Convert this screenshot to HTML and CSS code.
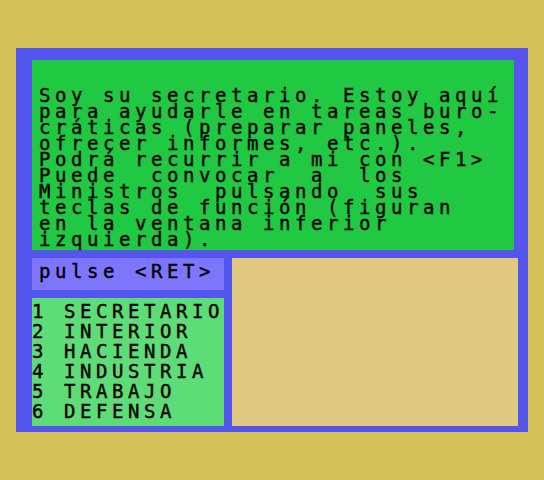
FILE: index.html
```html
<!DOCTYPE html>
<html lang="es">
<head>
<meta charset="utf-8">
<title>Secretario</title>
<link rel="stylesheet" href="styles.css">
</head>
<body>
<div class="screen">
  <div class="message">Soy su secretario. Estoy aquí
para ayudarle en tareas buro-
cráticas (preparar paneles,
ofrecer informes, etc.).
Podrá recurrir a mi con &lt;F1&gt;
Puede  convocar  a  los
Ministros  pulsando  sus
teclas de función (figuran
en la ventana inferior
izquierda).</div>
  <div class="lower">
    <div class="left">
      <div class="prompt">pulse &lt;RET&gt;</div>
      <div class="menu">1 SECRETARIO
2 INTERIOR
3 HACIENDA
4 INDUSTRIA
5 TRABAJO
6 DEFENSA</div>
    </div>
    <div class="board"></div>
  </div>
</div>
</body>
</html>
```
FILE: styles.css
```css
html, body {
  margin: 0;
  padding: 0;
}
body {
  background: #d2c156;
  width: 544px;
  height: 480px;
  padding-top: 48px;
  padding-left: 16px;
  box-sizing: border-box;
  font-family: "DejaVu Sans Mono", "Liberation Mono", monospace;
  font-size: 19px;
  color: #000;
}
.screen {
  width: 512px;
  height: 384px;
  box-sizing: border-box;
  background: #5455ed;
  padding: 12px 0 0 16px;
  display: flex;
  flex-direction: column;
  gap: 8px;
}
.message, .prompt, .menu {
  white-space: pre;
  letter-spacing: calc(16px - 1ch);
  -webkit-text-stroke: 0.4px #000;
}
.message {
  width: 482px;
  height: 190px;
  box-sizing: border-box;
  background: #21c842;
  padding: 27px 0 0 7px;
  line-height: 16px;
}
.lower {
  display: flex;
  gap: 8px;
}
.left {
  width: 192px;
  display: flex;
  flex-direction: column;
  gap: 8px;
}
.prompt {
  height: 32px;
  box-sizing: border-box;
  background: #7d76fc;
  padding: 5px 0 0 7px;
  line-height: 16px;
}
.menu {
  height: 128px;
  box-sizing: border-box;
  background: #5edc78;
  padding: 3px 0 0 0;
  line-height: 20px;
  overflow: hidden;
}
.board {
  width: 286px;
  height: 168px;
  background: #e0c880;
}
```
